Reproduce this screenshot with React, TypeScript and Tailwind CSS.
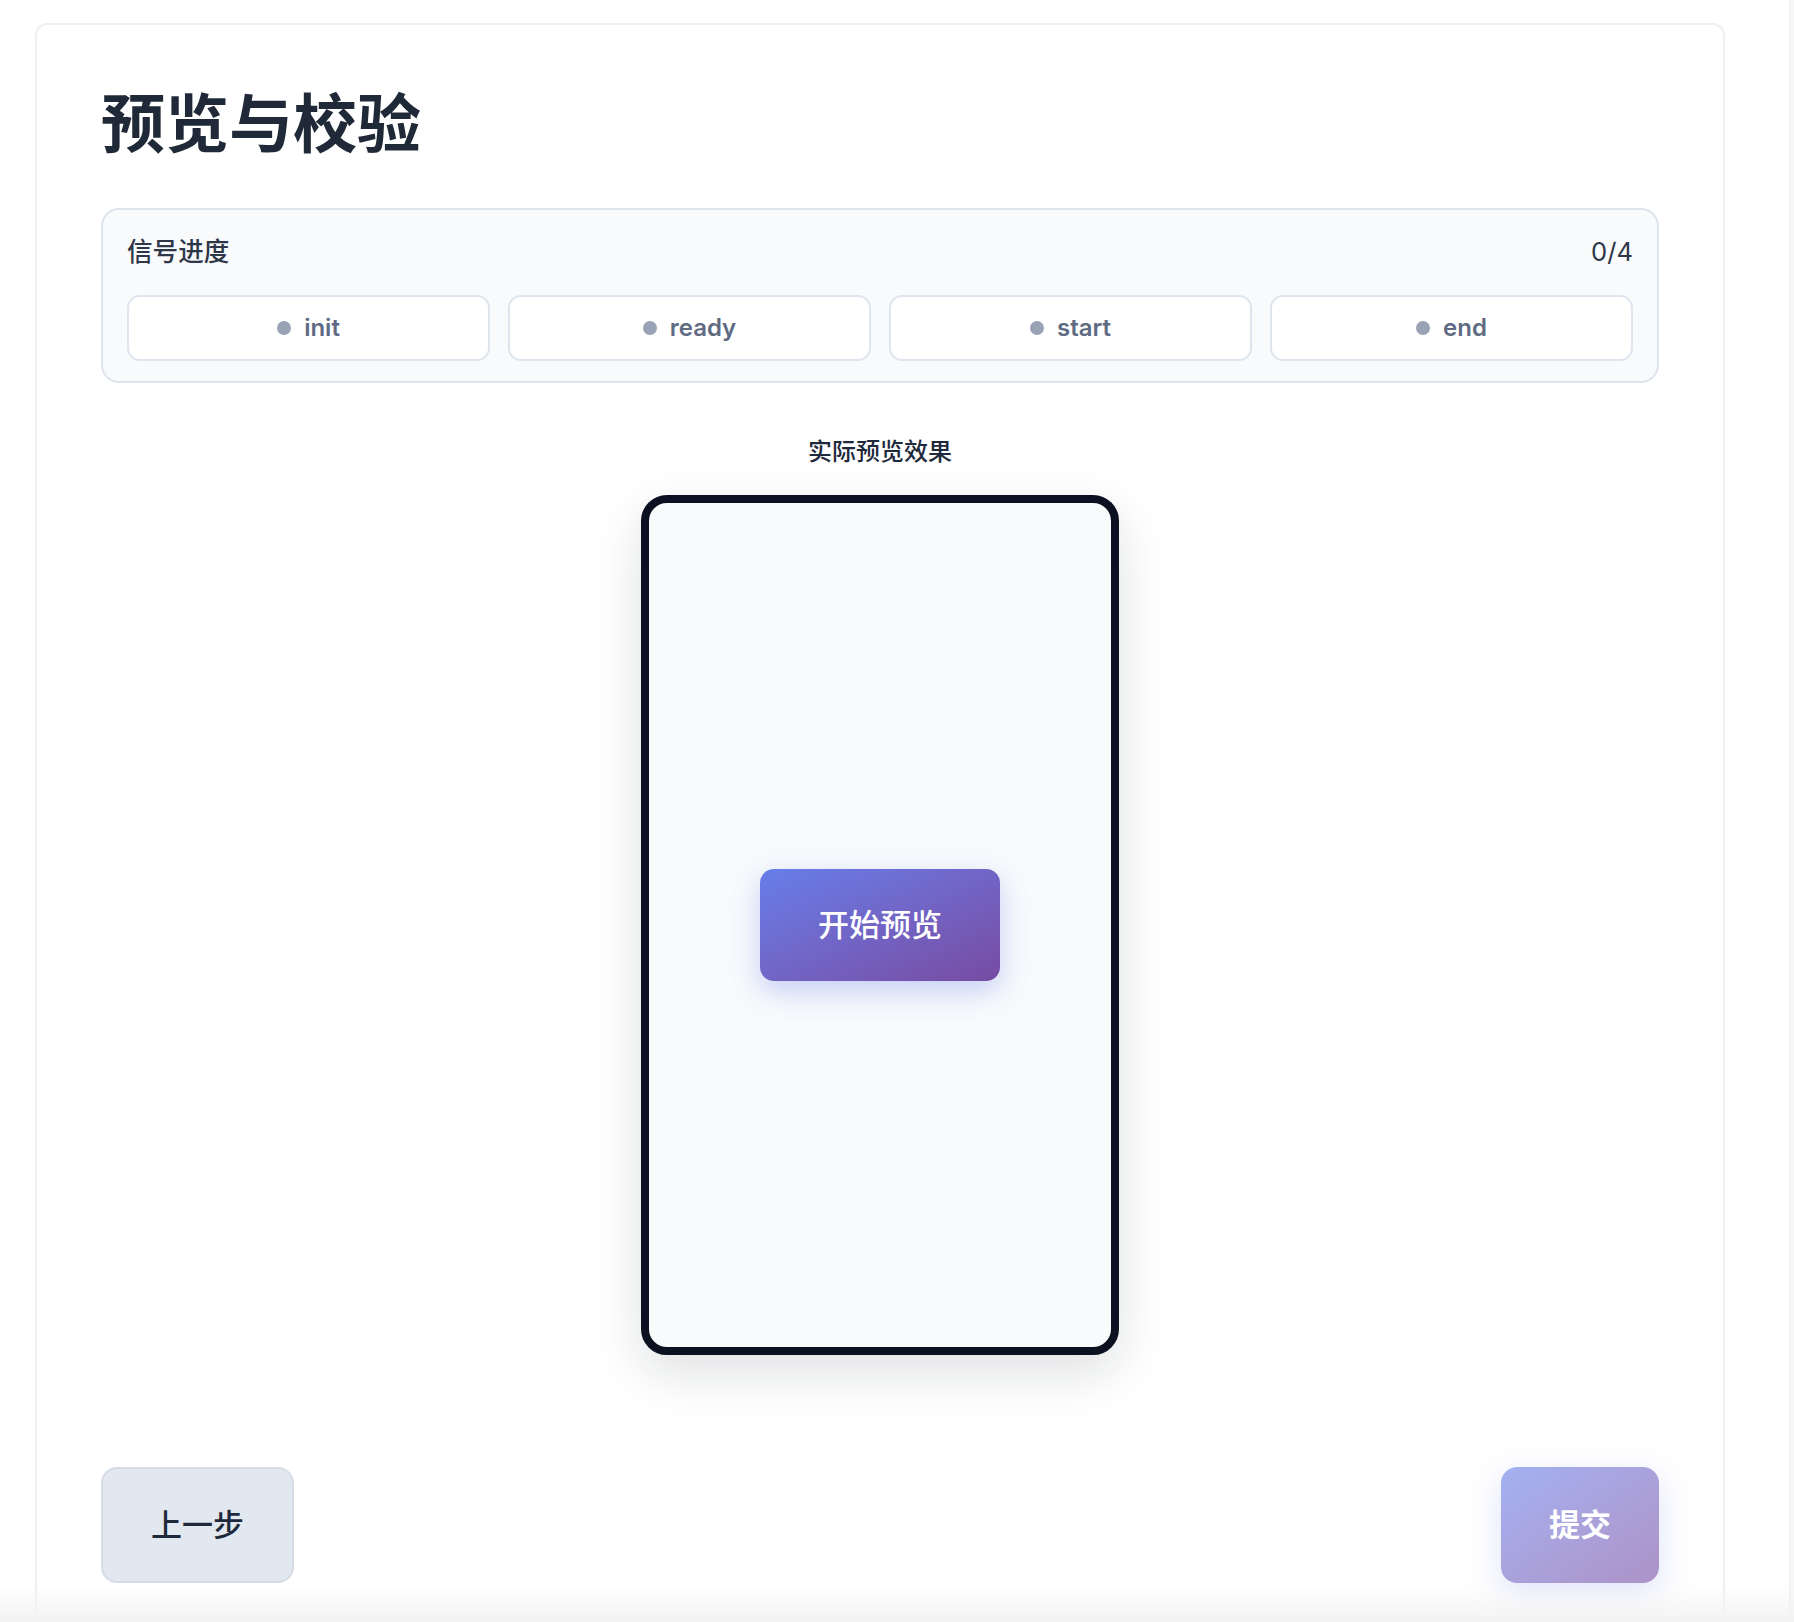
import React from "react";

const signals = ["init", "ready", "start", "end"];

export default function App() {
  return (
    <div className="relative flex min-h-screen bg-white font-[family-name:Inter,'Noto_Sans_CJK_SC',sans-serif]">
      <div className="w-[1790px] shrink-0 border-r border-[#eeeeee] bg-white pt-[23px] pl-[35px]">
        <div className="w-[1690px] rounded-[12px] border-2 border-[#f0f0f0] bg-white px-[64px] pt-[60px] pb-[64px]">
          <h1 className="text-[64px] leading-[77px] font-bold text-[#1f2937]">预览与校验</h1>

          <div className="mt-[46px] rounded-[18px] border-2 border-[#dfe5ee] bg-[#f8fafc] px-[24px] pt-[23px] pb-[20px]">
            <div className="flex items-center justify-between text-[25.6px] leading-[38px] text-[#2d3748]">
              <span className="font-medium">信号进度</span>
              <span>0/4</span>
            </div>
            <div className="mt-[24px] grid grid-cols-4 gap-[18px]">
              {signals.map((s) => (
                <div
                  key={s}
                  className="flex h-[66px] items-center justify-center gap-[13px] rounded-[13px] border-2 border-[#dfe5ee] bg-white"
                >
                  <span className="h-[14px] w-[14px] rounded-full bg-[#9aa3b5]" />
                  <span className="text-[24px] font-semibold text-[#5f6b83]">{s}</span>
                </div>
              ))}
            </div>
          </div>

          <div className="mt-[51px] flex flex-col items-center">
            <div className="text-[24px] leading-[36px] font-medium text-[#1e293b]">实际预览效果</div>
            <div className="mt-[25px] flex h-[860px] w-[478px] items-center justify-center rounded-[26px] border-[8px] border-[#0b1120] bg-[#f8fafc] shadow-[0_18px_50px_rgba(15,23,42,0.13)]">
              <button className="rounded-[14px] bg-linear-to-br from-[#667eea] to-[#764ba2] px-[58px] py-[36px] text-[31px] leading-[40px] font-medium text-white shadow-[0_10px_28px_rgba(102,126,234,0.35)]">
                开始预览
              </button>
            </div>
          </div>

          <div className="mt-[112px] flex items-center justify-between">
            <button className="rounded-[16px] border-2 border-[#d5dce6] bg-[#e2e8f0] px-[48px] py-[36px] text-[31px] leading-[40px] font-medium text-[#1e293b]">
              上一步
            </button>
            <button className="rounded-[16px] bg-linear-to-br from-[#667eea] to-[#764ba2] px-[48px] py-[38px] text-[31px] leading-[40px] font-semibold text-white opacity-60 shadow-[0_10px_30px_rgba(102,126,234,0.35)]">
              提交
            </button>
          </div>
        </div>
      </div>
      <div className="flex-1 bg-[#f7f7f7]" />
      <div className="pointer-events-none absolute left-0 top-[1585px] h-[37px] w-full bg-linear-to-b from-[rgba(245,245,245,0)] to-[#f3f3f3]" />
    </div>
  );
}
